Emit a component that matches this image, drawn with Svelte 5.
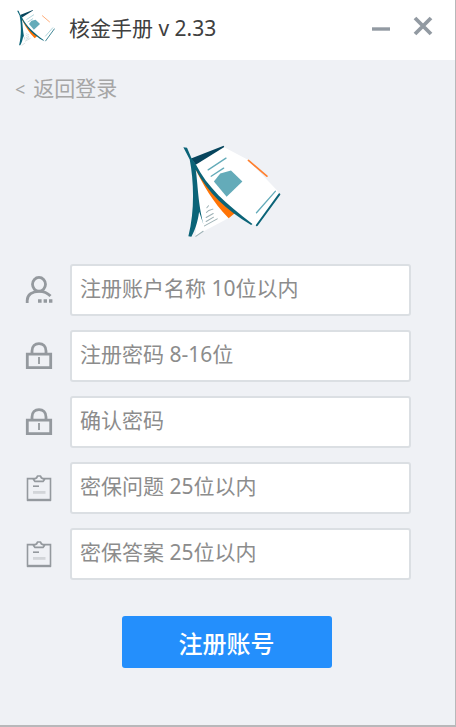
<script>
  const fields = [
    { id: 'account', icon: 'user', type: 'text', hint: '注册账户名称 10位以内', max: 10 },
    { id: 'password', icon: 'lock', type: 'password', hint: '注册密码 8-16位', max: 16 },
    { id: 'confirm', icon: 'lock', type: 'password', hint: '确认密码', max: 16 },
    { id: 'question', icon: 'note', type: 'text', hint: '密保问题 25位以内', max: 25 },
    { id: 'answer', icon: 'note', type: 'text', hint: '密保答案 25位以内', max: 25 }
  ];

  let values = $state({ account: '', password: '', confirm: '', question: '', answer: '' });
</script>

{#snippet logo(size)}
  <svg class="logo {size}" viewBox="40 45 292 280" aria-hidden="true">
    <path fill="#fff" d="M83 122 L178 262 L92 307 L78 316 Z" />
    <path fill="#ff7406" d="M78 119 C98 160 128 215 176 263 L196 247 C150 213 112 172 84 118 Z" />
    <path fill="#fff" d="M76 100 L160 50 L232 88 L322 182 L326 192 L262 284 L242 280 C170 226 115 178 76 100 Z" />
    <path fill="#07455d" d="M64 85 L161 47 L163 51 L78 104 Z" />
    <path fill="#0b6478" d="M41 52 L52 53 L65 84 L78 102 C112 170 168 220 247 280 L243 283 C168 239 115 188 78 119 C86 180 84 211 101 282 L88 244 C84 276 75 300 65 318 L56 317 C76 240 72 150 60 88 Z" />
    <path fill="#64abb9" d="M132 154 L151 130 L183 121 L217 154 L170 199 Z" />
    <g fill="none" stroke-linecap="round">
      <path stroke="#64abb9" stroke-width="4" d="M115 119 L168 84 M124 138 L161 114 M259 247 L315 183" />
      <path stroke="#0b6478" stroke-width="6" d="M260 284 L327 192" />
      <path stroke="#ff7f2e" stroke-width="5" d="M235 91 L290 138" />
      <path stroke="#9db1b5" stroke-width="3" d="M111 232 L116 226 M110 246 L117 240 L129 236 M109 261 L130 249 M109 273 L131 260 M104 286 L142 265 M78 317 L100 302" />
    </g>
  </svg>
{/snippet}

<main class="window">
  <header>
    {@render logo('small')}
    <h1>核金手册 v 2.33</h1>
    <button class="tool" type="button" aria-label="最小化">
      <svg viewBox="0 0 20 20"><path d="M1 13H19" stroke-width="3.4" /></svg>
    </button>
    <button class="tool" type="button" aria-label="关闭">
      <svg viewBox="0 0 20 20"><path d="M2 2L18 18M18 2L2 18" stroke-width="3.8" /></svg>
    </button>
  </header>

  <a class="back" href="#login"><span class="arrow">&lt;</span>返回登录</a>

  <div class="brand">{@render logo('large')}</div>

  <form onsubmit={(e) => e.preventDefault()}>
    {#each fields as field (field.id)}
      <div class="row">
        <label for={field.id} aria-label={field.hint}>
          <svg class="icon" viewBox="0 0 28 28" fill="none" stroke="#94999e" aria-hidden="true">
            {#if field.icon === 'user'}
              <ellipse cx="14" cy="8.3" rx="6.5" ry="6.9" stroke-width="2.8" />
              <path stroke-width="2.8" d="M2.2 27V24.5C2.2 18.5 7.5 15.3 14 15.3C19 15.3 22.5 16.8 25.5 20" />
              <path fill="#94999e" stroke="none" d="M13 23.2h3.6v3.6H13zM18.6 23.2h3.4v3.6h-3.4zM24 23.2h3.4v3.6H24z" />
            {:else if field.icon === 'lock'}
              <path stroke-width="2.8" d="M7 12V9C7 4.3 10 1.6 14 1.6S21 4.3 21 9V12" />
              <path stroke-width="2.8" d="M2.3 12.2H25.7V25.6H2.3Z" />
              <path stroke-width="1.8" d="M14 15V22" />
            {:else}
              <path stroke-width="1.6" d="M2.5 4.6H25.5V26H2.5Z" />
              <path stroke-width="2.4" d="M2 26H26" />
              <path fill="#eff1f5" stroke-width="1.7" stroke-linejoin="round" d="M8.5 5.4L11.5 4L12.6 2H15.4L16.5 4L19.5 5.4L18 7.4H10Z" />
              <path stroke-width="1.6" d="M8 12.2H14" />
              <path stroke="#d2d5d9" stroke-width="2.8" d="M8 18.4H20.5" />
            {/if}
          </svg>
        </label>
        <input id={field.id} type={field.type} placeholder={field.hint} maxlength={field.max} bind:value={values[field.id]} />
      </div>
    {/each}
    <button class="submit" type="submit">注册账号</button>
  </form>
</main>

<style>
  :global(body) {
    margin: 0;
  }

  .window,
  input,
  button {
    font-family: "Noto Sans", "Noto Sans CJK SC", sans-serif;
    font-size: 21px;
  }

  .window {
    box-sizing: border-box;
    min-height: 100vh;
    background: #eff1f5;
    border-right: 1px solid #b8b8ba;
    border-bottom: 2px solid #b8b8ba;
  }

  header {
    display: flex;
    align-items: center;
    box-sizing: border-box;
    height: 60px;
    padding: 0 11px 4px 17px;
    background: #fff;
  }

  h1 {
    flex: 1;
    margin: 0 0 0 14px;
    color: #404040;
    font-size: 21px;
    font-weight: 400;
    line-height: 30px;
  }

  .logo {
    display: block;
  }

  .small {
    width: 38px;
    height: 38px;
  }

  .large {
    width: 98px;
    height: 94px;
  }

  .tool {
    display: grid;
    place-items: center;
    width: 42px;
    height: 42px;
    padding: 0;
    border: 0;
    background: none;
    cursor: pointer;
  }

  .tool svg {
    width: 20px;
    height: 20px;
    margin-bottom: 4px;
    fill: none;
    stroke: #929aa2;
  }

  .back {
    display: inline-block;
    margin: 13px 0 0 15px;
    color: #a6a6a6;
    line-height: 30px;
    text-decoration: none;
  }

  .arrow {
    margin-right: 8px;
    font-size: 18px;
  }

  .brand {
    display: flex;
    justify-content: center;
    padding: 41px 0 25px 8px;
  }

  form {
    display: flex;
    flex-direction: column;
    gap: 14px;
    padding: 0 44px 56px 25px;
  }

  .row {
    display: flex;
    align-items: center;
    gap: 17px;
  }

  .icon {
    display: block;
    width: 28px;
    height: 28px;
  }

  input {
    flex: 1;
    box-sizing: border-box;
    min-width: 0;
    height: 52px;
    padding: 0 8px 4px;
    border: 2px solid #dbdfe3;
    border-radius: 3px;
    background: #fff;
    color: #404040;
    outline: none;
  }

  input:focus {
    border-color: #248ffc;
  }

  input::placeholder {
    color: #8c8c8c;
    opacity: 1;
  }

  .submit {
    align-self: center;
    width: 210px;
    height: 52px;
    margin: 22px 0 0 17px;
    padding: 0;
    border: 0;
    border-radius: 3px;
    background: #248ffc;
    color: #fff;
    font-size: 24px;
    font-weight: 500;
    cursor: pointer;
  }
</style>
